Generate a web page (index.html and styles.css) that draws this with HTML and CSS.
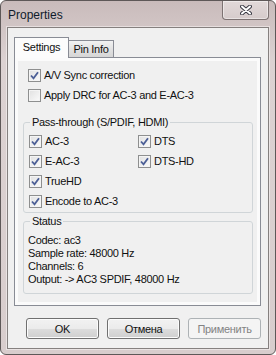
FILE: index.html
```html
<!DOCTYPE html>
<html lang="en">
<head>
    <meta charset="UTF-8">
    <title>Properties</title>
    <link rel="stylesheet" href="styles.css">
</head>
<body>
    <div class="window">
        <div class="titlebar">
            <span class="title">Properties</span>
            <button class="close" type="button">
                <svg width="12" height="10" viewBox="0 0 12 10">
                    <path d="M2 1.5 L10 8.5 M10 1.5 L2 8.5" stroke="#3b3b45" stroke-width="4" stroke-linecap="round"/>
                    <path d="M2 1.5 L10 8.5 M10 1.5 L2 8.5" stroke="#fff" stroke-width="2" stroke-linecap="round"/>
                </svg>
            </button>
        </div>
        <div class="client">
            <div class="tabs">
                <div class="tab active">Settings</div>
                <div class="tab">Pin Info</div>
            </div>
            <div class="panel">
                <label class="check top"><span class="box"><svg width="11" height="11" viewBox="0 0 11 11"><path d="M2 5.5 L4.5 8.3 L9 2.2" fill="none" stroke="#4c5f96" stroke-width="1.8"/></svg></span>A/V Sync correction</label>
                <label class="check top"><span class="box"></span>Apply DRC for AC-3 and E-AC-3</label>

                <fieldset class="group">
                    <legend>Pass-through (S/PDIF, HDMI)</legend>
                    <div class="grid">
                        <label class="check"><span class="box"><svg width="11" height="11" viewBox="0 0 11 11"><path d="M2 5.5 L4.5 8.3 L9 2.2" fill="none" stroke="#4c5f96" stroke-width="1.8"/></svg></span>AC-3</label>
                        <label class="check"><span class="box"><svg width="11" height="11" viewBox="0 0 11 11"><path d="M2 5.5 L4.5 8.3 L9 2.2" fill="none" stroke="#4c5f96" stroke-width="1.8"/></svg></span>DTS</label>
                        <label class="check"><span class="box"><svg width="11" height="11" viewBox="0 0 11 11"><path d="M2 5.5 L4.5 8.3 L9 2.2" fill="none" stroke="#4c5f96" stroke-width="1.8"/></svg></span>E-AC-3</label>
                        <label class="check"><span class="box"><svg width="11" height="11" viewBox="0 0 11 11"><path d="M2 5.5 L4.5 8.3 L9 2.2" fill="none" stroke="#4c5f96" stroke-width="1.8"/></svg></span>DTS-HD</label>
                        <label class="check"><span class="box"><svg width="11" height="11" viewBox="0 0 11 11"><path d="M2 5.5 L4.5 8.3 L9 2.2" fill="none" stroke="#4c5f96" stroke-width="1.8"/></svg></span>TrueHD</label>
                        <span></span>
                        <label class="check"><span class="box"><svg width="11" height="11" viewBox="0 0 11 11"><path d="M2 5.5 L4.5 8.3 L9 2.2" fill="none" stroke="#4c5f96" stroke-width="1.8"/></svg></span>Encode to AC-3</label>
                    </div>
                </fieldset>

                <fieldset class="group status">
                    <legend>Status</legend>
                    <div class="line">Codec: ac3</div>
                    <div class="line">Sample rate: 48000 Hz</div>
                    <div class="line">Channels: 6</div>
                    <div class="line">Output: -&gt; AC3 SPDIF, 48000 Hz</div>
                </fieldset>
            </div>
            <div class="buttons">
                <button class="btn" type="button">OK</button>
                <button class="btn" type="button">Отмена</button>
                <button class="btn" type="button" disabled>Применить</button>
            </div>
        </div>
    </div>
</body>
</html>
```

FILE: styles.css
```css
* {
    box-sizing: border-box;
}
body {
    margin: 0;
    font-family: "Liberation Sans", Arial, sans-serif;
    font-size: 11px;
    letter-spacing: -0.3px;
    color: #111;
    background: #fff;
}
.window {
    width: 276px;
    height: 355px;
    border: 1px solid #5e5858;
    border-radius: 6px;
    background: linear-gradient(#c9bbbb, #dcd2d2 60px, #d8cdcd);
    display: flex;
    flex-direction: column;
    overflow: hidden;
}
.titlebar {
    height: 26px;
    display: flex;
    justify-content: space-between;
    align-items: flex-start;
    padding: 0 6px 0 7px;
}
.title {
    padding-top: 7px;
    line-height: 14px;
    font-size: 12px;
    letter-spacing: 0;
    color: #101c2c;
}
.close {
    width: 47px;
    height: 19px;
    margin: 0;
    padding: 0;
    border: 1px solid #7d7272;
    border-top: none;
    border-radius: 0 0 4px 4px;
    background: linear-gradient(#e2d9d9, #d6cbcb);
    box-shadow: inset 0 0 0 1px rgba(255, 255, 255, 0.45);
    display: flex;
    align-items: center;
    justify-content: center;
}
.client {
    height: 322px;
    margin: 0 6px 5px 6px;
    border: 1px solid #85807f;
    box-shadow: 0 0 0 1px rgba(255, 255, 255, 0.45);
    background: #f0f0f0;
    padding: 9px 7px 0 6px;
}
.tabs {
    display: flex;
    align-items: flex-end;
    height: 20px;
}
.tab {
    height: 17px;
    border: 1px solid #898c95;
    border-bottom: none;
    padding-top: 2px;
    line-height: 13px;
    text-align: center;
    background: linear-gradient(#f2f2f2, #e2e2e2 50%, #d6d6d6);
    width: 46px;
    margin-left: -1px;
}
.tab.active {
    position: relative;
    z-index: 1;
    height: 21px;
    margin-bottom: -1px;
    margin-left: 0;
    width: 55px;
    padding-top: 3px;
    background: #fcfcfc;
}
.panel {
    width: 247px;
    height: 249px;
    border: 1px solid #898c95;
    background: #f0f0f0;
    box-shadow: inset 0 0 0 3px #fbfbfb;
    padding: 7px 7px 0 8px;
}
.check {
    display: flex;
    align-items: center;
    gap: 3px;
    height: 20px;
    white-space: nowrap;
}
.check.top {
    margin-left: 5px;
}
.box {
    width: 13px;
    height: 13px;
    flex: none;
    border: 1px solid #8e8f8f;
    background: linear-gradient(135deg, #e0e0e0, #fbfbfb);
    box-shadow: inset 0 0 0 1px #f4f4f4;
    display: flex;
    align-items: center;
    justify-content: center;
}
.group {
    margin: 11px 0 0 0;
    padding: 2px 5px 1px 5px;
    border: 1px solid #d0d5d8;
    border-radius: 3px;
    min-inline-size: 0;
}
.group legend {
    margin-left: 1px;
    padding: 0 2px;
    line-height: 13px;
}
.grid {
    display: grid;
    grid-template-columns: 109px 1fr;
}
.status {
    margin-top: 2px;
    padding: 6px 4px 7px 4px;
}
.status legend {
    margin-left: 2px;
}
.line {
    line-height: 13px;
    white-space: nowrap;
}
.buttons {
    display: flex;
    justify-content: flex-end;
    gap: 8px;
    margin-top: 12px;
}
.btn {
    width: 73px;
    height: 21px;
    padding: 0;
    font-family: inherit;
    font-size: 11px;
    letter-spacing: -0.3px;
    color: #111;
    border: 1px solid #707070;
    border-radius: 3px;
    background: linear-gradient(#f2f2f2, #ebebeb 50%, #dddddd 50%, #cfcfcf);
    box-shadow: inset 0 0 0 1px #fcfcfc;
}
.btn:disabled {
    color: #838383;
    border-color: #adb2b5;
    background: #f4f4f4;
    box-shadow: none;
}
```
